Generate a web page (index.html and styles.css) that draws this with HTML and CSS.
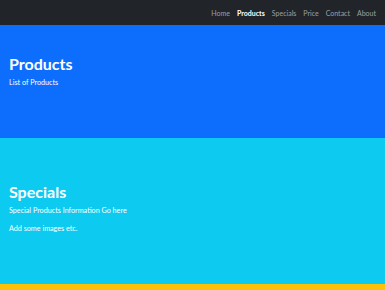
FILE: index.html
```html
<!DOCTYPE html>
<html lang="en">
<head>
    <meta charset="UTF-8">
    <meta name="viewport" content="width=device-width, initial-scale=1.0">
    <title>Products</title>
    <link rel="stylesheet" href="styles.css">
</head>
<body>
    <header class="navbar">
        <nav>
            <a href="#">Home</a>
            <a href="#" class="active">Products</a>
            <a href="#">Specials</a>
            <a href="#">Price</a>
            <a href="#">Contact</a>
            <a href="#">About</a>
        </nav>
    </header>

    <section class="products">
        <h1>Products</h1>
        <p>List of Products</p>
    </section>

    <section class="specials">
        <h1>Specials</h1>
        <p>Special Products Information Go here</p>
        <p>Add some images etc.</p>
    </section>

    <section class="price"></section>
</body>
</html>
```

FILE: styles.css
```css
body {
    font-family: 'Lato', sans-serif;
    margin: 0;
    color: #ffffff;
}
.navbar {
    background-color: #212529;
    height: 25px;
    display: flex;
    justify-content: flex-end;
    align-items: center;
    padding: 0 9px;
}
nav {
    display: flex;
    gap: 7px;
}
nav a {
    color: rgba(255, 255, 255, 0.55);
    text-decoration: none;
    font-size: 7px;
}
nav a.active {
    color: #ffffff;
    font-weight: 700;
}
section {
    padding: 0 9px;
    box-sizing: border-box;
}
section h1 {
    font-size: 16px;
    font-weight: 700;
    line-height: 20px;
    margin: 0 0 4px 0;
}
section p {
    font-size: 7.2px;
    line-height: 10px;
    margin: 0 0 8px 0;
}
.products {
    background-color: #0d6efd;
    height: 113px;
    padding-top: 29px;
}
.specials {
    background-color: #0dcaf0;
    height: 146px;
    padding-top: 44px;
}
.price {
    background-color: #ffc107;
    height: 6px;
}
```
